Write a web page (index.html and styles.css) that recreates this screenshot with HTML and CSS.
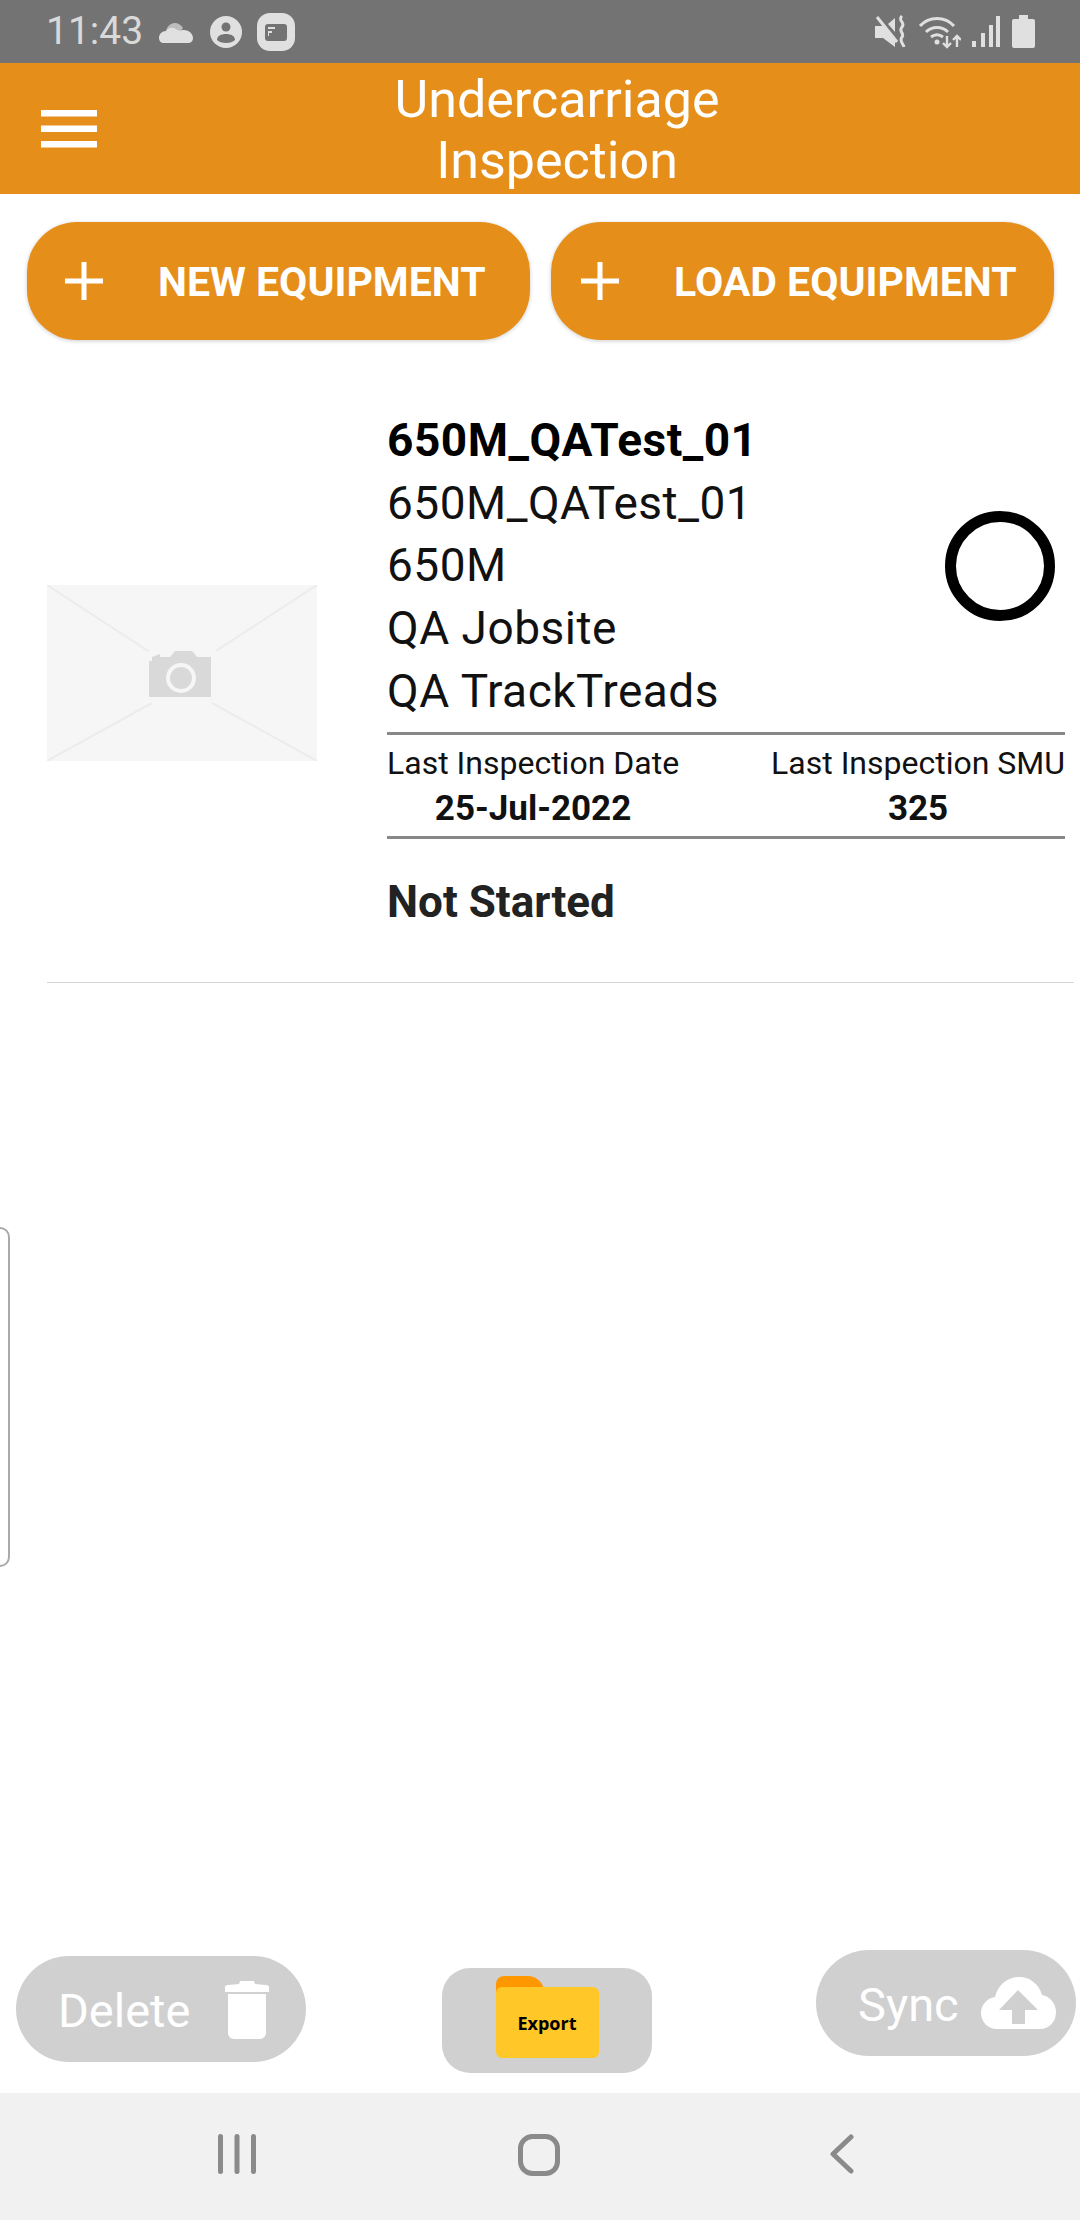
FILE: index.html
```html
<!DOCTYPE html>
<html lang="en">
<head>
<meta charset="utf-8">
<title>Undercarriage Inspection</title>
<link rel="stylesheet" href="styles.css">
</head>
<body>
<div class="screen">
  <div class="statusbar">
    <div class="status-left">
      <span class="time">11:43</span>
      <svg class="i-cloud" viewBox="0 0 34 24"><path fill="#bdbdbd" d="M7 12a9 9 0 0 1 17-4l-6 8H7z"/><path fill="#e0e0e0" d="M0 18c0-4 3-7 7-7 3-4 8-4 11-1 1 0 2 0 3 1 1-1 2-1 4-1 5 0 9 4 9 8 0 3-2 5-5 5H5c-3 0-5-2-5-5z"/></svg>
      <svg class="i-person" viewBox="0 0 32 32"><circle cx="16" cy="16" r="16" fill="#e0e0e0"/><circle cx="16" cy="11" r="4.500" fill="#737373"/><path fill="#737373" d="M7 24c0-4 4-6 9-6s9 2 9 6c-2 2-5 3-9 3s-7-1-9-3z"/></svg>
      <svg class="i-app" viewBox="0 0 38 38"><rect width="38" height="38" rx="13" fill="#e0e0e0"/><rect x="8" y="11" width="22" height="17" rx="3" fill="#737373"/><path fill="#e0e0e0" d="M11 14h7v2h-7zM11 18h4v2h-3v3h-1z"/></svg>
    </div>
    <div class="status-right">
      <svg class="i-mute" viewBox="0 0 32 34"><path fill="#e0e0e0" d="M0 11h7l2 0 11 12v9L8 23H0z"/><path fill="#e0e0e0" d="M13 9l7-6v14z"/><path stroke="#e0e0e0" stroke-width="3" fill="none" d="M2 2l20 25"/><path stroke="#e0e0e0" stroke-width="3" fill="none" d="M27 1c-5 5 4 6 0 11s3 6 0 10 1 6 2 10"/></svg>
      <svg class="i-wifi" viewBox="0 0 42 34"><g fill="none" stroke="#e0e0e0" stroke-width="3"><path d="M1 11C10 1 26 1 35 11"/><path d="M7 17c6-6 16-6 22 0"/><path d="M12 22c4-3 8-3 12 0"/></g><circle cx="18" cy="27" r="2.500" fill="#e0e0e0"/><path stroke="#e0e0e0" stroke-width="2.400" fill="none" d="M28 21v11M24 28l4 4 4-4M38 32V21M34 25l4-4 4 4"/></svg>
      <svg class="i-signal" viewBox="0 0 28 32"><g fill="#e0e0e0"><rect x="0" y="25" width="4" height="6"/><rect x="9" y="17" width="4" height="14"/><rect x="17" y="9" width="4" height="22"/><rect x="24" y="0" width="4" height="31"/></g></svg>
      <svg class="i-battery" viewBox="0 0 23 33"><path fill="#e0e0e0" d="M7 0h9v4h5a2 2 0 0 1 2 2v25a2 2 0 0 1-2 2H2a2 2 0 0 1-2-2V6a2 2 0 0 1 2-2h5z"/></svg>
    </div>
  </div>

  <header class="appbar">
    <svg class="i-menu" viewBox="0 0 56 38"><g fill="#fff"><rect y="0" width="56" height="6.500"/><rect y="15.500" width="56" height="6.500"/><rect y="31" width="56" height="6.500"/></g></svg>
    <h1 class="title">Undercarriage<br>Inspection</h1>
  </header>

  <div class="actions">
    <button class="pill pill-new"><svg class="i-plus" viewBox="0 0 38 38"><path fill="#fff" d="M16.500 0h5v16.500H38v5H21.500V38h-5V21.500H0v-5h16.500z"/></svg><span>NEW EQUIPMENT</span></button>
    <button class="pill pill-load"><svg class="i-plus" viewBox="0 0 38 38"><path fill="#fff" d="M16.500 0h5v16.500H38v5H21.500V38h-5V21.500H0v-5h16.500z"/></svg><span>LOAD EQUIPMENT</span></button>
  </div>

  <section class="item">
    <svg class="thumb" viewBox="0 0 270 176">
      <rect width="270" height="176" fill="#f6f6f6"/>
      <path d="M0 0l135 88L270 0M0 176l105-58M270 176l-105-58" fill="none" stroke="#ececec" stroke-width="2"/>
      <g transform="translate(1 4)">
        <rect x="100" y="62" width="70" height="50" fill="#f6f6f6"/>
        <path fill="#d9d9d9" d="M104 72v-4l8-3v3l10 0 5-6h17l5 6h14v40h-62V72z"/>
        <circle cx="133" cy="89" r="15" fill="#f6f6f6"/>
        <circle cx="133" cy="89" r="11" fill="#d9d9d9"/>
      </g>
    </svg>
    <div class="details">
      <div class="top">
        <div class="lines">
          <div class="line line-strong">650M_QATest_01</div>
          <div class="line">650M_QATest_01</div>
          <div class="line">650M</div>
          <div class="line">QA Jobsite</div>
          <div class="line">QA TrackTreads</div>
        </div>
        <div class="radio"></div>
      </div>
      <div class="stats">
        <div class="stat">
          <div class="stat-label">Last Inspection Date</div>
          <div class="stat-value">25-Jul-2022</div>
        </div>
        <div class="stat">
          <div class="stat-label">Last Inspection SMU</div>
          <div class="stat-value">325</div>
        </div>
      </div>
      <div class="state">Not Started</div>
    </div>
  </section>
  <div class="divider"></div>

  <div class="handle"></div>

  <div class="footer">
    <button class="soft soft-delete"><span>Delete</span>
      <svg class="i-trash" viewBox="0 0 44 60"><path fill="#fff" d="M3 6l11-1 1-3h14l1 3 11 1c2 0 3 1 3 2v4c0 1 0 1-1 1H1c-1 0-1 0-1-1V8c0-1 1-2 3-2zM3 15h38v39c0 3-3 6-6 6H9c-3 0-6-3-6-6z"/></svg>
    </button>
    <button class="export">
      <span class="folder"><span class="folder-tab"></span><span class="folder-body">Export</span></span>
    </button>
    <button class="soft soft-sync"><span>Sync</span>
      <svg class="i-upload" viewBox="0 0 75 52"><path fill="#fff" d="M16 52C7 52 0 45 0 36c0-8 6-15 14-16C17 8 26 0 38 0c11 0 20 7 23 18 8 1 14 9 14 17 0 10-7 17-16 17z"/><path fill="#d0d0d0" d="M37 13l20 20H44v14H31V33H18z"/></svg>
    </button>
  </div>

  <nav class="navbar">
    <svg class="i-recents" viewBox="0 0 38 40"><g fill="#8a8a8a"><rect x="0" y="0" width="5" height="40" rx="2.500"/><rect x="16.500" y="0" width="5" height="40" rx="2.500"/><rect x="33" y="0" width="5" height="40" rx="2.500"/></g></svg>
    <svg class="i-home" viewBox="0 0 42 42"><rect x="2.500" y="2.500" width="37" height="37" rx="12" fill="none" stroke="#8a8a8a" stroke-width="5"/></svg>
    <svg class="i-back" viewBox="0 0 25 40"><path d="M22 3L4 20l18 17" fill="none" stroke="#8a8a8a" stroke-width="5" stroke-linecap="round" stroke-linejoin="round"/></svg>
  </nav>
</div>
</body>
</html>
```

FILE: styles.css
```css
* { box-sizing: border-box; }
html, body { margin: 0; padding: 0; background: #fff; }
.screen {
  position: relative;
  width: 1080px;
  height: 2220px;
  overflow: hidden;
  display: flex;
  flex-direction: column;
  font-family: Roboto, "Liberation Sans", sans-serif;
  color: #111;
}
svg { display: block; flex: none; }
button { border: 0; font-family: inherit; padding: 0; }

.statusbar {
  height: 63px;
  flex: none;
  background: #737373;
  display: flex;
  align-items: center;
  justify-content: space-between;
  padding: 0 45px 0 46px;
}
.status-left, .status-right { display: flex; align-items: center; }
.time { font-size: 39px; color: #d9d9d9; width: 113px; line-height: 63px; }
.i-cloud { width: 34px; height: 24px; margin-right: 17px; }
.i-person { width: 32px; height: 32px; margin-right: 15px; }
.i-app { width: 38px; height: 38px; }
.i-mute { width: 32px; height: 34px; margin-right: 12px; }
.i-wifi { width: 42px; height: 34px; margin-right: 11px; }
.i-signal { width: 28px; height: 32px; margin-right: 12px; }
.i-battery { width: 23px; height: 33px; }

.appbar {
  height: 131px;
  flex: none;
  background: #e68e1a;
  display: flex;
  align-items: center;
  padding-left: 41px;
}
.i-menu { width: 56px; height: 38px; }
.title {
  margin: 0;
  flex: 1;
  font-weight: 400;
  font-size: 52px;
  line-height: 61px;
  color: #fff;
  text-align: center;
  padding: 3px 63px 0 0;
  white-space: nowrap;
}

.actions {
  flex: none;
  display: flex;
  gap: 21px;
  padding: 28px 26px 0 27px;
}
.pill {
  flex: none;
  width: 503px;
  height: 118px;
  border-radius: 50px;
  background: #e68e1a;
  color: #fff;
  display: flex;
  align-items: center;
  font-size: 41px;
  font-weight: 700;
  box-shadow: 0 1px 4px rgba(0,0,0,.2);
  white-space: nowrap;
}
.pill span { padding-top: 2px; }
.i-plus { width: 38px; height: 38px; }
.pill-new { padding-left: 38px; }
.pill-new span { margin-left: 55px; }
.pill-load { padding-left: 30px; }
.pill-load span { margin-left: 55px; }

.item {
  flex: none;
  display: flex;
  align-items: center;
  margin-top: 69px;
  padding-left: 47px;
}
.thumb { width: 270px; height: 176px; margin: 4px 70px 0 0; }
.details { width: 678px; }
.top { display: flex; align-items: center; justify-content: space-between; padding-right: 10px; }
.line { font-size: 46px; letter-spacing: 0.5px; line-height: 62.700px; color: #111; white-space: nowrap; }
.line-strong { font-weight: 700; color: #000; }
.radio { width: 110px; height: 110px; border: 11px solid #000; border-radius: 50%; }
.stats {
  display: flex;
  justify-content: space-between;
  margin-top: 9px;
  height: 107px;
  border-top: 3px solid #888;
  border-bottom: 3px solid #888;
}
.stat { text-align: center; white-space: nowrap; }
.stat-label { font-size: 32px; line-height: 44px; color: #111; margin-top: 6px; }
.stat-value { font-size: 35px; font-weight: 700; line-height: 44px; color: #111; padding-top: 2px; }
.state { font-size: 44px; font-weight: 700; color: #222; line-height: 63px; margin-top: 32px; }

.divider { flex: none; height: 1px; margin: 48px 6px 0 47px; background: #d6d6d6; }

.handle {
  position: absolute;
  left: -20px;
  top: 1227px;
  width: 30px;
  height: 340px;
  border: 2px solid #aaa;
  border-radius: 10px;
}

.footer {
  margin-top: auto;
  flex: none;
  height: 143px;
  display: flex;
  align-items: flex-start;
  padding-left: 16px;
}
.soft {
  background: #d0d0d0;
  color: #fff;
  border-radius: 53px;
  display: flex;
  align-items: center;
  font-size: 47px;
  white-space: nowrap;
}
.soft span { padding-top: 3px; }
.soft-delete { width: 290px; height: 106px; margin-top: 6px; padding-left: 42px; }
.i-trash { width: 44px; height: 60px; margin-left: 35px; }
.export {
  width: 210px;
  height: 105px;
  margin-top: 18px;
  margin-left: 136px;
  border-radius: 28px;
  background: #d0d0d0;
  display: flex;
  justify-content: center;
  align-items: flex-start;
}
.folder { display: block; position: relative; width: 103px; height: 82px; margin-top: 8px; }
.folder-tab { position: absolute; left: 0; top: 0; width: 48px; height: 30px; background: #ff9800; border-radius: 8px 16px 0 0; }
.folder-body {
  position: absolute; left: 0; right: 0; top: 11px; bottom: 0;
  background: #ffc727;
  border-radius: 6px;
  font-family: "Open Sans", sans-serif;
  font-weight: 700;
  font-size: 18px;
  color: #000;
  display: flex;
  align-items: center;
  justify-content: center;
}
.soft-sync { width: 260px; height: 106px; margin-left: 164px; padding-left: 42px; }
.i-upload { width: 75px; height: 52px; margin-left: 22px; }

.navbar {
  flex: none;
  height: 127px;
  background: #f1f1f1;
  position: relative;
  display: flex;
  align-items: flex-start;
  padding-top: 41px;
  padding-left: 218px;
}
.i-recents { width: 38px; height: 40px; }
.i-home { width: 42px; height: 42px; margin-left: 262px; }
.i-back { width: 25px; height: 40px; margin-left: 269px; }
```
